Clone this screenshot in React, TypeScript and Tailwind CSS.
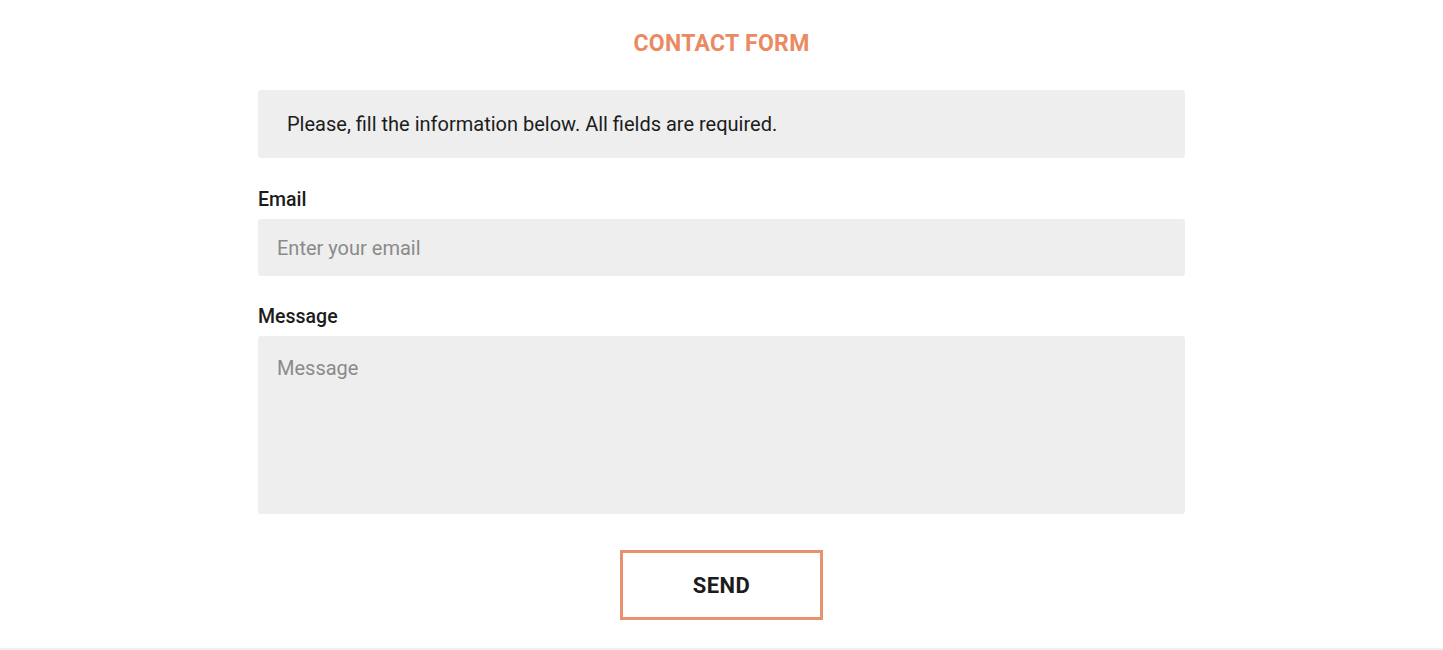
export default function App() {
  return (
    <div className="min-h-[650px] bg-white font-['Roboto',sans-serif] text-[#1c1c1c]">
      <div className="h-[650px] border-b-2 border-[#f0f0f0]">
        <div className="mx-auto w-[927px] pt-[31px]">
          <h2 className="text-center text-[23px] font-bold leading-[26px] tracking-[0.3px] text-[#ea8a62] mb-[33px]">
            CONTACT FORM
          </h2>

          <div className="flex h-[68px] items-center rounded-[3px] bg-[#eeeeee] px-[29px]">
            <p className="text-[20px] leading-[24px]">Please, fill the information below. All fields are required.</p>
          </div>

          <form className="mt-[30px]" onSubmit={(e) => e.preventDefault()}>
            <label className="mb-[7px] block text-[19.5px] font-medium leading-[24px]">Email</label>
            <input
              type="email"
              placeholder="Enter your email"
              className="block h-[57px] w-full rounded-[3px] bg-[#eeeeee] px-[19px] text-[20px] placeholder:text-[#8a8a8a] focus:outline-none"
            />

            <label className="mt-[29px] mb-[7px] block text-[19.5px] font-medium leading-[24px]">Message</label>
            <textarea
              placeholder="Message"
              className="block h-[178px] w-full resize-none rounded-[3px] bg-[#eeeeee] px-[19px] pt-[20px] text-[20px] leading-[24px] placeholder:text-[#8a8a8a] focus:outline-none"
            />

            <div className="mt-[36px] flex justify-center">
              <button
                type="submit"
                className="h-[70px] w-[203px] border-[3px] border-[#e8916e] bg-white text-[22px] font-bold tracking-[0.5px] text-[#1c1c1c]"
              >
                SEND
              </button>
            </div>
          </form>
        </div>
      </div>
    </div>
  );
}
